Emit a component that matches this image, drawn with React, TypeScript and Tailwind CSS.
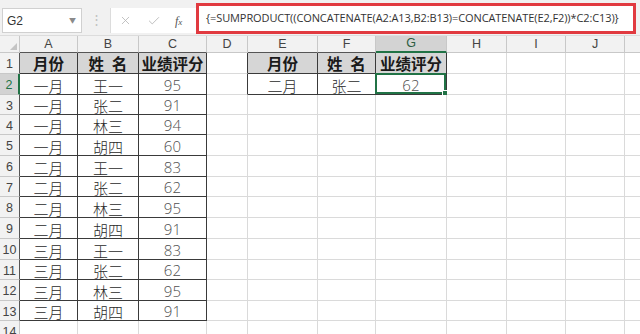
import { X, Check } from 'lucide-react';

const COLS = [
  { key: 'A', w: 'w-[58px]' },
  { key: 'B', w: 'w-[61px]' },
  { key: 'C', w: 'w-[68px]' },
  { key: 'D', w: 'w-[41px]' },
  { key: 'E', w: 'w-[70px]' },
  { key: 'F', w: 'w-[58px]' },
  { key: 'G', w: 'w-[71px]' },
  { key: 'H', w: 'w-[60px]' },
  { key: 'I', w: 'w-[59px]' },
  { key: 'J', w: 'w-[59px]' },
  { key: '', w: 'w-[40px]' },
];

const ROW_H = [
  'h-[21px]', 'h-[21px]', 'h-[20px]', 'h-[20px]', 'h-[21px]', 'h-[21px]', 'h-[20px]',
  'h-[21px]', 'h-[21px]', 'h-[21px]', 'h-[20px]', 'h-[21px]', 'h-[20px]', 'h-[20px]',
];

const LEFT: string[][] = [
  ['月份', '姓\u2002名', '业绩评分'],
  ['一月', '王一', '95'],
  ['一月', '张二', '91'],
  ['一月', '林三', '94'],
  ['一月', '胡四', '60'],
  ['二月', '王一', '83'],
  ['二月', '张二', '62'],
  ['二月', '林三', '95'],
  ['二月', '胡四', '91'],
  ['三月', '王一', '83'],
  ['三月', '张二', '62'],
  ['三月', '林三', '95'],
  ['三月', '胡四', '91'],
];

const RIGHT: string[][] = [
  ['月份', '姓\u2002名', '业绩评分'],
  ['二月', '张二', '62'],
];

// r: 1-based row, c: 0-based column index
function cellText(r: number, c: number): string {
  if (c <= 2 && r >= 1 && r <= 13) return LEFT[r - 1][c];
  if (c >= 4 && c <= 6 && r >= 1 && r <= 2) return RIGHT[r - 1][c - 4];
  return '';
}

function inTable(r: number, c: number) {
  if (c >= 0 && c <= 2 && r >= 1 && r <= 13) return true;
  if (c >= 4 && c <= 6 && r >= 1 && r <= 2) return true;
  return false;
}

function Toolbar() {
  return (
    <div className="h-[36px] bg-[#f1f1f1] flex items-start pt-[3px] border-b border-[#dcdcdc]">
      {/* name box */}
      <div className="mt-[5px] ml-[2px] w-[80px] h-[25px] bg-white border border-[#d0d0d0] flex items-center justify-between px-[4px]">
        <span className="text-[12px] text-[#333] font-['Liberation_Sans',sans-serif]">G2</span>
        <span className="text-[7px] text-[#8a8a8a] leading-none mr-[1px]">▼</span>
      </div>
      <div className="w-[28px] h-[31px] flex items-center justify-center text-[#c0c0c0] text-[13px]">⋮</div>
      {/* cancel / enter / fx */}
      <div className="mt-[5px] w-[86px] h-[25px] bg-white border-l border-[#dcdcdc] flex items-center">
        <X className="w-[13px] h-[13px] ml-[8px] text-[#b5b5b5]" strokeWidth={1.5} />
        <Check className="w-[14px] h-[14px] ml-[15px] text-[#b5b5b5]" strokeWidth={1.5} />
        <span className="ml-[14px] text-[12px] italic text-[#555] font-['Liberation_Serif',serif]">
          f<span className="text-[9px]">x</span>
        </span>
      </div>
      {/* formula bar highlighted */}
      <div className="w-[440px] h-[31px] border-[3px] border-[#e13a40] bg-white flex items-center pl-[7px]">
        <span className="text-[11px] text-[#333] whitespace-nowrap font-['Open_Sans',sans-serif] tracking-[-0.1px]">
          {'{=SUMPRODUCT((CONCATENATE(A2:A13,B2:B13)=CONCATENATE(E2,F2))*C2:C13)}'}
        </span>
      </div>
    </div>
  );
}

function ColumnHeader() {
  return (
    <div className="flex h-[17px]">
      <div className="w-[20px] shrink-0 bg-[#f2f2f2] border-r border-b border-[#c8c8c8] relative">
        <div className="absolute right-[2px] bottom-[2px] w-0 h-0 border-l-[7px] border-l-transparent border-b-[7px] border-b-[#c4c4c4]" />
      </div>
      {COLS.map((col, c) => {
        const selected = col.key === 'G';
        const dark = inTable(1, c);
        return (
          <div
            key={c}
            className={`${col.w} shrink-0 flex items-center justify-center text-[12.5px] font-['Liberation_Sans',sans-serif] border-r ${
              selected
                ? 'bg-[#d3d3d3] text-[#2b5d3f] border-r-[#c8c8c8] border-b-2 border-b-[#217346]'
                : dark
                ? 'bg-[#f2f2f2] text-[#444] border-r-[#c8c8c8] border-b border-b-[#555]'
                : 'bg-[#f2f2f2] text-[#444] border-r-[#c8c8c8] border-b border-b-[#c8c8c8]'
            }`}
          >
            {col.key}
          </div>
        );
      })}
    </div>
  );
}

function Row({ r }: { r: number }) {
  const h = ROW_H[r - 1];
  const rowSelected = r === 2;
  return (
    <div className={`flex ${h}`}>
      <div
        className={`w-[20px] shrink-0 flex items-center justify-center pt-[3px] text-[12.5px] font-['Liberation_Sans',sans-serif] border-b border-b-[#c8c8c8] ${
          rowSelected
            ? 'bg-[#d3d3d3] text-[#217346] border-r-2 border-r-[#217346]'
            : inTable(r, 0)
            ? 'bg-[#f2f2f2] text-[#444] border-r border-r-[#555]'
            : 'bg-[#f2f2f2] text-[#444] border-r border-r-[#c8c8c8]'
        }`}
      >
        {r}
      </div>
      {COLS.map((col, c) => {
        const here = inTable(r, c);
        const rightDark = here || inTable(r, c + 1);
        const bottomDark = here || inTable(r + 1, c);
        const header = here && r === 1;
        const text = cellText(r, c);
        const numeric = /^\d+$/.test(text);
        const selected = r === 2 && col.key === 'G';
        return (
          <div
            key={c}
            className={`${col.w} shrink-0 relative flex items-center justify-center pt-[2px] border-r border-b ${
              rightDark ? 'border-r-[#3a3a3a]' : 'border-r-[#dadada]'
            } ${bottomDark ? 'border-b-[#3a3a3a]' : 'border-b-[#dadada]'} ${
              header ? 'bg-[#d6d6d6]' : 'bg-white'
            }`}
          >
            {header ? (
              <span className="text-[15.5px] font-bold text-[#1a1a1a] whitespace-pre leading-none">{text}</span>
            ) : numeric ? (
              <span className="text-[15px] text-[#505050] tracking-[0.3px] font-['Open_Sans',sans-serif] font-light leading-none">
                {text}
              </span>
            ) : (
              <span className="text-[15px] text-[#2a2a2a] font-light leading-none">{text}</span>
            )}
            {selected && (
              <div className="absolute -left-[1px] -top-[1px] right-0 bottom-0 border-2 border-[#217346]">
                <div className="absolute -right-[4px] -bottom-[4px] w-[6px] h-[6px] bg-[#217346] border border-white" />
              </div>
            )}
          </div>
        );
      })}
    </div>
  );
}

export default function App() {
  const rows = Array.from({ length: 14 }, (_, i) => i + 1);
  return (
    <div className="w-[640px] h-[334px] overflow-hidden bg-white font-['Noto_Sans_CJK_SC',sans-serif]">
      <Toolbar />
      <ColumnHeader />
      {rows.map((r) => (
        <Row key={r} r={r} />
      ))}
    </div>
  );
}
